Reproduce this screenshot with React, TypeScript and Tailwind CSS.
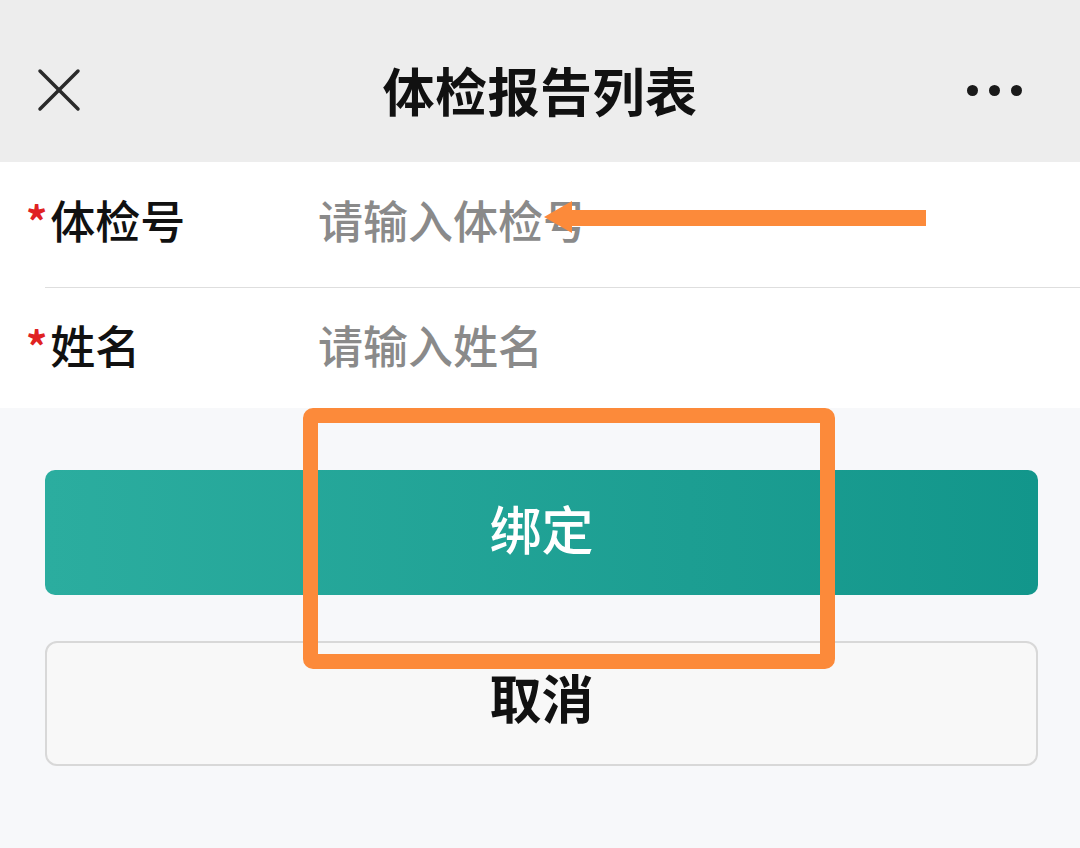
export default function App() {
  return (
    <div className="relative w-[1080px] h-[848px] overflow-hidden bg-[#f7f8fa] font-['Noto_Sans_CJK_SC',sans-serif]">
      <header className="grid grid-cols-[1fr_auto_1fr] items-center h-[162px] pt-[18px] bg-[#ededed]">
        <div className="pl-[37px]">
          <svg width="44" height="44" viewBox="0 0 44 44" fill="none" stroke="#2a2a2a" strokeWidth="3.5" strokeLinecap="round">
            <path d="M3 3 L41 41" />
            <path d="M41 3 L3 41" />
          </svg>
        </div>
        <h1 className="text-[52px] font-bold leading-none text-[#111] tracking-[0.5px]">体检报告列表</h1>
        <div className="flex justify-end gap-[11px] pr-[58px]">
          <span className="w-[11px] h-[11px] rounded-full bg-[#1a1a1a]" />
          <span className="w-[11px] h-[11px] rounded-full bg-[#1a1a1a]" />
          <span className="w-[11px] h-[11px] rounded-full bg-[#1a1a1a]" />
        </div>
      </header>

      <section className="bg-white">
        <div className="flex items-center h-[125px] pl-[26px] pb-[10px] text-[45px] leading-none font-medium">
          <div className="w-[292px] flex items-start text-[#111]">
            <span className="text-[#e02222] text-[42px] font-bold leading-none mt-[2px] mr-[3px]">*</span>
            <span>体检号</span>
          </div>
          <span className="text-[#8a8a8a]">请输入体检号</span>
        </div>
        <div className="ml-[45px] h-px bg-[#dedede]" />
        <div className="flex items-center h-[120px] pl-[26px] pb-[8px] text-[45px] leading-none font-medium">
          <div className="w-[292px] flex items-start text-[#111]">
            <span className="text-[#e02222] text-[42px] font-bold leading-none mt-[2px] mr-[3px]">*</span>
            <span>姓名</span>
          </div>
          <span className="text-[#8a8a8a]">请输入姓名</span>
        </div>
      </section>

      <div className="flex flex-col gap-[46px] pt-[62px] pl-[45px] pr-[42px]">
        <button className="h-[125px] pb-[10px] rounded-[10px] bg-gradient-to-r from-[#2bad9f] to-[#12968b] text-white text-[52px] font-medium leading-none">
          绑定
        </button>
        <button className="h-[125px] pb-[14px] rounded-[12px] border-2 border-[#d8d8d8] bg-[#f8f8f8] text-[#111] text-[52px] font-bold leading-none">
          取消
        </button>
      </div>

      <div className="absolute left-[303px] top-[408px] w-[532px] h-[261px] rounded-[10px] border-[15px] border-[#fc8a3a]" />

      <svg className="absolute left-[540px] top-[195px]" width="390" height="46" viewBox="0 0 390 46">
        <rect x="28" y="15" width="358" height="16" fill="#fc8a3a" />
        <path d="M4 22 L32 6 L32 38 Z" fill="#fc8a3a" />
      </svg>
    </div>
  );
}
